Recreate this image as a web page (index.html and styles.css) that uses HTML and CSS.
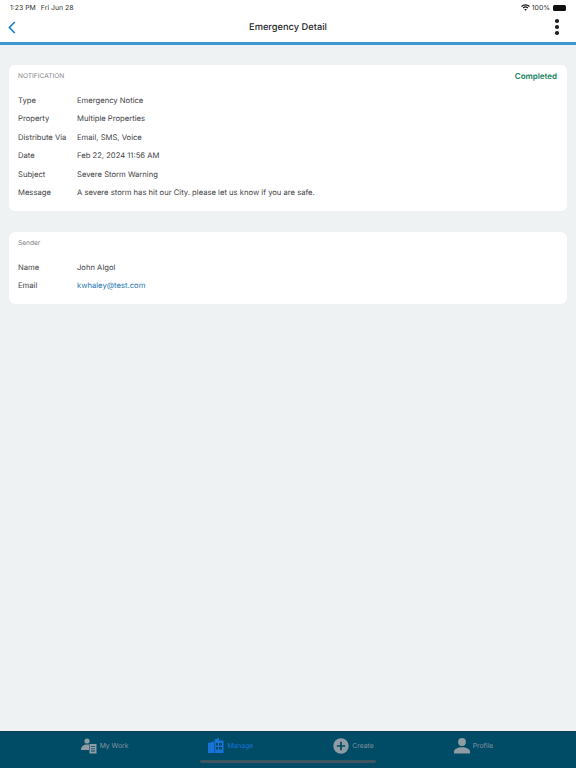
FILE: index.html
```html
<!DOCTYPE html>
<html lang="en">

<head>
  <meta charset="UTF-8" />
  <meta name="viewport" content="width=device-width, initial-scale=1.0" />
  <title>Emergency Detail</title>

  <link rel="stylesheet" href="styles.css">
</head>

<body>
  <!-- Status bar -->
  <div class="status-bar">
    <div class="status-left">
      <span>1:23 PM</span>
      <span>Fri Jun 28</span>
    </div>
    <div class="status-right">
      <svg class="wifi" width="9" height="7" viewBox="0 0 18 14" fill="none" stroke="#111" stroke-width="2.4">
        <path d="M1 5 C5.5 0.6 12.5 0.6 17 5" />
        <path d="M4.2 8 C7 5.4 11 5.4 13.8 8" />
        <path d="M9 13.5 L6.6 10.8 C8 9.8 10 9.8 11.4 10.8 Z" fill="#111" stroke="none" />
      </svg>
      <span>100%</span>
      <span class="battery"><span class="battery-fill"></span></span>
    </div>
  </div>

  <!-- Header -->
  <header class="nav-bar">
    <svg class="back" width="8" height="13" viewBox="0 0 8 13">
      <path d="M6.8 1 L1.4 6.5 L6.8 12" fill="none" stroke="#1a7fd0" stroke-width="1.7" />
    </svg>
    <h1>Emergency Detail</h1>
    <div class="dots"><span></span><span></span><span></span></div>
  </header>

  <main class="content">
    <section class="card">
      <div class="card-head">
        <span class="card-title">NOTIFICATION</span>
        <span class="status">Completed</span>
      </div>
      <div class="row"><span class="label">Type</span><span>Emergency Notice</span></div>
      <div class="row"><span class="label">Property</span><span>Multiple Properties</span></div>
      <div class="row"><span class="label">Distribute Via</span><span>Email, SMS, Voice</span></div>
      <div class="row"><span class="label">Date</span><span>Feb 22, 2024 11:56 AM</span></div>
      <div class="row"><span class="label">Subject</span><span>Severe Storm Warning</span></div>
      <div class="row"><span class="label">Message</span><span>A severe storm has hit our City. please let us know if you are safe.</span></div>
    </section>

    <section class="card">
      <div class="card-head">
        <span class="card-title">Sender</span>
      </div>
      <div class="row"><span class="label">Name</span><span>John Algol</span></div>
      <div class="row"><span class="label">Email</span><a href="#">kwhaley@test.com</a></div>
    </section>
  </main>

  <!-- Tab bar -->
  <nav class="tab-bar">
    <div class="tab">
      <svg width="16" height="16" viewBox="0 0 16 16" fill="#8f9ca3">
        <circle cx="6" cy="3" r="2.6" />
        <path d="M0 12 C0 8 3 6.5 6 6.5 L8 6.5 L8 12 Z" />
        <path d="M8.5 6 H15.5 V15.5 H8.5 Z M10 8.2 V9 H14 V8.2 Z M10 10.4 V11.2 H14 V10.4 Z M10 12.6 V13.4 H14 V12.6 Z" fill-rule="evenodd" />
      </svg>
      <span>My Work</span>
    </div>
    <div class="tab active">
      <svg width="16" height="15" viewBox="0 0 16 15" fill="#1673d8">
        <path d="M0 5 L6 3.4 V15 H0 Z" />
        <path d="M6.5 1.5 L11 0 V2.5 H15.5 V15 H6.5 Z M7.8 5 V7.5 H10 V5 Z M11 5 V7.5 H14 V5 Z M7.8 9 V11.5 H10 V9 Z M11 9 V11.5 H14 V9 Z" fill-rule="evenodd" />
      </svg>
      <span>Manage</span>
    </div>
    <div class="tab">
      <svg width="16" height="16" viewBox="0 0 16 16">
        <circle cx="8" cy="8" r="7.7" fill="#8f9ca3" />
        <path d="M8 3.8 V12.2 M3.8 8 H12.2" stroke="#004b66" stroke-width="1.7" />
      </svg>
      <span>Create</span>
    </div>
    <div class="tab">
      <svg width="16" height="16" viewBox="0 0 16 16" fill="#8f9ca3">
        <circle cx="8" cy="4" r="3.9" />
        <path d="M0 15.5 V14 C0 10.8 4 9.3 8 9.3 C12 9.3 16 10.8 16 14 V15.5 Z" />
      </svg>
      <span>Profile</span>
    </div>
    <div class="home-indicator"></div>
  </nav>
</body>

</html>
```

FILE: styles.css
```css
* {
  box-sizing: border-box;
}

body {
  margin: 0;
  height: 100vh;
  display: flex;
  flex-direction: column;
  background: #eef2f3;
  font-family: Inter, "Liberation Sans", sans-serif;
  font-size: 7.65px;
  color: #444448;
  text-rendering: geometricPrecision;
}

/* status bar */
.status-bar {
  height: 14px;
  padding: 1px 9px 0 10px;
  display: flex;
  justify-content: space-between;
  align-items: center;
  background: #fff;
  font-size: 6.9px;
  color: #333;
}

.status-left {
  display: flex;
  gap: 5px;
}

.status-right {
  display: flex;
  align-items: center;
  gap: 2px;
}

.battery {
  width: 14px;
  height: 6px;
  padding: 0 1px 0 0;
  margin-left: 1px;
  display: block;
}

.battery-fill {
  display: block;
  width: 100%;
  height: 100%;
  background: #111;
  border-radius: 1.5px;
}

/* header */
.nav-bar {
  height: 31px;
  flex: none;
  padding: 0 8px 2px;
  display: grid;
  grid-template-columns: 1fr auto 1fr;
  align-items: center;
  background: #fff;
  border-bottom: 3px solid #3d98cf;
}

.nav-bar h1 {
  margin: 0;
  font-size: 9.3px;
  font-weight: 500;
  color: #2a2a2e;
}

.dots {
  justify-self: end;
  margin-right: 9px;
  display: flex;
  flex-direction: column;
  gap: 2.4px;
}

.dots span {
  width: 3.6px;
  height: 3.6px;
  border-radius: 50%;
  background: #222;
}

/* cards */
.content {
  flex: 1;
  padding: 20px 9px 0;
  display: flex;
  flex-direction: column;
  gap: 21px;
}

.card {
  background: #fff;
  border-radius: 6px;
  padding: 4px 9px 9px;
}

.card-head {
  height: 13px;
  margin-bottom: 9px;
  display: flex;
  justify-content: space-between;
  align-items: center;
}

.card-title {
  font-size: 6.6px;
  color: #85858a;
}

.status {
  margin-right: 1px;
  font-size: 8px;
  font-weight: 600;
  color: #12805c;
}

.row {
  height: 18.5px;
  display: flex;
  align-items: center;
}

.label {
  width: 59px;
  flex: none;
}

a {
  color: #2a78b0;
  text-decoration: none;
}

/* tab bar */
.tab-bar {
  position: relative;
  height: 37px;
  flex: none;
  padding: 0 2px 9px 0;
  display: flex;
  justify-content: center;
  gap: 80px;
  background: #004b66;
  border-top: 1px solid #0b3f55;
}

.tab {
  display: flex;
  align-items: center;
  gap: 3px;
  font-size: 6.8px;
  color: #84959e;
}

.tab.active {
  color: #1673d8;
}

.home-indicator {
  position: absolute;
  left: 200px;
  bottom: 5px;
  width: 176px;
  height: 3px;
  border-radius: 2px;
  background: #3d5560;
}
```
